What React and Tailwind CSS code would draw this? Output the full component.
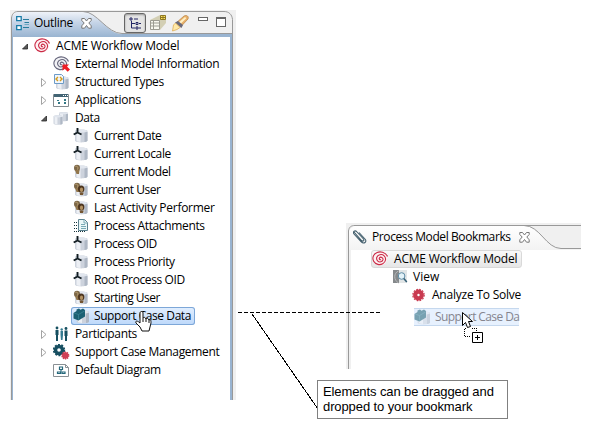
import React from "react";

function Spiral({ gray = false, arrow = false }) {
  const c = gray ? "#66667c" : "#cb2a45";
  return (
    <svg width="18" height="16" viewBox="0 0 18 16" fill="none" className="shrink-0">
      <ellipse cx="8" cy="7.800" rx="7.200" ry="6.600" fill={gray ? "#f2f2f5" : "#fdf0f2"} />
      <path d="M9 8.600C7.800 9.200 6.800 7.900 7.500 6.900C8.700 5.300 11.300 6.600 11 8.700C10.600 11 7.300 11.700 5.600 9.900C3.600 7.700 4.800 4.400 7.800 3.700C11.400 2.900 14 5.700 13.500 9C12.900 12.300 9.200 14.300 5.900 13.400C2 12.400 0 8.600 1.300 5.200C2.700 1.600 7 .2 10.600 1.300C12.900 2 14.700 3.400 15.500 5.500" stroke={c} strokeWidth="1.100" />
      {arrow && <path d="M9.500 8.500H16l-2 2 3 3-2.300 2.300-3-3-2.200 2z" fill="#ee1c24" />}
    </svg>
  );
}

function Cylinder({ x = 3 }) {
  return (
    <g transform={`translate(${x} 0)`}>
      <path d="M0 3c0-2 12.500-2 12.500 0v9.500c0 2.500-12.500 2.500-12.500 0z" fill="#cdd3dd" />
      <path d="M1.500 4h4v10c-2.500-.1-4-.6-4-1.200z" fill="#edf0f5" />
      <path d="M9.500 4h3v8.500c0 .8-1.300 1.200-3 1.400z" fill="#afb8c5" />
      <ellipse cx="6.250" cy="3.100" rx="6" ry="1.500" fill="#e1e6ee" />
    </g>
  );
}

function Icon({ name }) {
  if (name === "spiral") return <Spiral />;
  if (name === "external") return <Spiral gray arrow />;
  return (
    <svg width="17" height="16" viewBox="0 0 17 16" fill="none" className="shrink-0">
      {name === "types" && (
        <>
          <g transform="translate(3 1)"><Cylinder x={0} /></g>
          <path d="M1.500 .5h7l2 2v7h-9z" fill="#f1f6fb" stroke="#6c9bc8" />
          <path d="M5 3L3 5l2 2M7 3l2 2-2 2" stroke="#d49a18" strokeWidth="1.400" />
        </>
      )}
      {name === "apps" && (
        <>
          <path d="M.5 2.500h15v12H.5z" fill="#fff" stroke="#838b90" />
          <path d="M1 2h14v3H1z" fill="#426474" />
          <path d="M10 3.500h1M12 3.500h1M14 3.500h1" stroke="#fff" />
          <path d="M4 8h2v1H4zM11 7h2v2h-2zM5 10h2v2H5zM11 10h2v2h-2z" fill="#347886" />
        </>
      )}
      {name === "data" && (
        <>
          <g transform="translate(6 1) scale(.72 .72)"><Cylinder x={0} /></g>
          <g transform="translate(.5 4) scale(.72 .75)"><Cylinder x={0} /></g>
        </>
      )}
      {name === "primitive" && (
        <>
          <Cylinder x={2} />
          <path d="M4.500 0v4.500L.7 6.500M4.500 4.500l4 2" stroke="#111c21" strokeWidth="1.900" />
        </>
      )}
      {(name === "model" || name === "user") && (
        <>
          <Cylinder x={2} />
          <ellipse cx="4" cy="4" rx="3" ry="3.300" fill="#7d6848" />
          <path d="M2 6l1.500 4H6l.5-4z" fill="#92764c" />
          <path d="M2.500 2.500c2-1 3 1 2 3" stroke="#c3a879" />
          {name === "user" && (
            <>
              <ellipse cx="8.200" cy="7" rx="3.200" ry="3.600" fill="#4c351f" />
              <ellipse cx="8.500" cy="7.800" rx="1.600" ry="2.200" fill="#b39263" />
              <path d="M6.500 10.500l.5 2.500h3l.7-2.500" fill="#745632" />
            </>
          )}
        </>
      )}
      {name === "attach" && (
        <>
          <path d="M5.500 1.500h6l3 3v8h-9z" fill="#eaf7f8" stroke="#5c8290" />
          <path d="M11 1.500V5h3.500M8 6.500h4M8 8.500h5M8 10.500h5" stroke="#78a9b5" />
          <path d="M1 4.500h4M1 7.500h4M1 10.500h4M1 13.500h12" stroke="#17333a" strokeDasharray="1 1" />
        </>
      )}
      {name === "struct" && (
        <>
          <g transform="translate(3.500 1)"><Cylinder x={0} /></g>
          <path d="M.5 5l3-2V1.500L6 .5l1.500 1.300L10 .5 12 2v6.500L5.500 12.500.5 10.500z" fill="#1c6073" />
          <path d="M1 5l4.500 1.500L11.500 3M5.500 6.500v5" stroke="#458ea0" strokeWidth=".6" />
        </>
      )}
      {name === "people" && (
        <g transform="translate(.5 0)">
          <circle cx="3.500" cy="2" r="1.400" fill="#164f60" />
          <path d="M2 4h3v5h-.5v6h-2V9H2z" fill="#164f60" />
          <circle cx="8.200" cy="3.500" r="1.200" fill="#347b91" />
          <path d="M7 5h2.500v4L9 14H7.500L7 9z" fill="#347b91" />
          <circle cx="12.500" cy="2.500" r="1.400" fill="#164f60" />
          <path d="M11 4.500h3V10h-.5v5h-2v-5H11z" fill="#164f60" />
        </g>
      )}
      {name === "process" && (
        <>
          <circle cx="6" cy="6" r="3.500" stroke="#174f61" strokeWidth="3.400" />
          <circle cx="6" cy="6" r="5.400" stroke="#174f61" strokeWidth="1.600" strokeDasharray="2 1.393" />
          <circle cx="12.300" cy="11.500" r="3.200" fill="#cf4055" />
          <circle cx="12.300" cy="11.500" r="3.300" stroke="#cf4055" strokeDasharray="1.300 .773" strokeWidth="1.500" />
        </>
      )}
      {name === "diagram" && (
        <>
          <path d="M.5 2.500h12l3 3v9H.5z" fill="#fff" stroke="#8a9094" />
          <path d="M12.500 2.500v3h3" stroke="#8a9094" />
          <path d="M6.500 5h3v2.500h-3zM4.500 10h3v1.500h-3zM9 10h3v1.500H9zM8 7.500v2" stroke="#24677a" strokeWidth="1.200" />
        </>
      )}
      {name === "view" && (
        <>
          <path d="M0 1h14v13H0z" fill="#85898b" />
          <path d="M6 1h8v13H6z" fill="#e1e5e6" />
          <path d="M5.500 2c-5 2-5 9 0 12" stroke="#b6b8b9" />
          <circle cx="8.600" cy="7" r="3.300" fill="#e3f2f8" stroke="#5c8aa4" />
          <path d="M10.800 9.500l3 3.500" stroke="#315c73" strokeWidth="1.500" />
        </>
      )}
      {name === "redgear" && (
        <>
          <circle cx="6.500" cy="8" r="3.300" stroke="#c93a50" strokeWidth="4.200" />
          <circle cx="6.500" cy="8" r="5.700" stroke="#c93a50" strokeWidth="1.200" strokeDasharray="1.700 1.284" />
        </>
      )}
    </svg>
  );
}

function Twisty({ open }) {
  return (
    <svg width="8" height="10" viewBox="0 0 8 10" className="shrink-0">
      {open ? <path d="M6.500 3v5H1.500z" fill="#595959" stroke="#262626" strokeWidth=".8" /> : <path d="M1.500 1.500v8L6 5.500z" fill="#fff" stroke="#a3a3a3" />}
    </svg>
  );
}

function CloseTab() {
  return (
    <svg width="11" height="11" viewBox="0 0 11 11" className="shrink-0">
      <path d="M.8 .5h2.700l2 2.500 2-2.500h2.700v2L7.800 5l2.400 2.800v2.400H7.500l-2-2.700-2 2.700H.8V7.800L3.200 5 .8 2.500z" fill="#fff" stroke="#777" />
    </svg>
  );
}

const rows = [
  ["External Model Information", "external", 1, null, "tracking-[-0.37px]"],
  ["Structured Types", "types", 1, false, "tracking-[-0.39px]"],
  ["Applications", "apps", 1, false, "tracking-[-0.2px]"],
  ["Data", "data", 1, true, "tracking-[-0.4px]"],
  ["Current Date", "primitive", 2, null, "tracking-[-0.44px]"],
  ["Current Locale", "primitive", 2, null, "tracking-[-0.35px]"],
  ["Current Model", "model", 2, null, "tracking-[-0.35px]"],
  ["Current User", "user", 2, null, "tracking-[-0.5px]"],
  ["Last Activity Performer", "user", 2, null, "tracking-[-0.27px]"],
  ["Process Attachments", "attach", 2, null, "tracking-[-0.36px]"],
  ["Process OID", "primitive", 2, null, "tracking-[-0.45px]"],
  ["Process Priority", "primitive", 2, null, "tracking-[-0.39px]"],
  ["Root Process OID", "primitive", 2, null, "tracking-[-0.39px]"],
  ["Starting User", "user", 2, null, "tracking-[-0.54px]"],
  ["Support Case Data", "struct", 2, null, "tracking-[-0.43px]"],
  ["Participants", "people", 1, false, "tracking-[-0.36px]"],
  ["Support Case Management", "process", 1, false, "tracking-[-0.34px]"],
  ["Default Diagram", "diagram", 1, null, "tracking-[-0.38px]"],
];

function TreeRow({ row }) {
  const [text, icon, level, open, tracking] = row;
  const selected = text === "Support Case Data";
  return (
    <div className={`flex h-[18px] items-center ${level === 2 ? "pl-[58px]" : "pl-[27px]"}`}>
      {level === 1 && <span className="flex w-[13px]">{open !== null && <Twisty open={open} />}</span>}
      <div className={`flex h-[18px] items-center whitespace-nowrap ${selected ? "w-[124px] rounded-[3px] bg-linear-to-b from-[#e2efff] to-[#bdd8fa] ring-1 ring-inset ring-[#7da7d8]" : ""}`}>
        <span className={level === 2 ? "w-[23px] pl-[2px]" : "w-[22px]"}><Icon name={icon} /></span>
        <span className={tracking}>{text}</span>
      </div>
    </div>
  );
}

function OutlineHeader() {
  return (
    <div className="relative h-[27px]">
      <svg className="absolute inset-0" width="226" height="27" viewBox="0 0 226 27" fill="none">
        <defs>
          <linearGradient id="tab" x1="0" y1="0" x2="0" y2="1">
            <stop stopColor="#f2f5fa" />
            <stop offset=".45" stopColor="#c5d4e7" />
            <stop offset="1" stopColor="#99b4d1" />
          </linearGradient>
        </defs>
        <path d="M0 0h226v27H0z" fill="#f0f0f0" />
        <path d="M1 27V7L7 1h66c14 0 24 23 39 23h111v3z" fill="url(#tab)" />
        <path d="M112 24h111v3H112z" fill="#99b4d1" />
        <path d="M1.500 27V8C2 4 4 1.500 8 1.500h65c14 0 24 22 39 22h110M73 1.500h141c5 0 8 3 8.500 8V27" stroke="#999" />
      </svg>
      <div className="relative flex h-[26px] items-center pl-[6px]">
        <svg width="14" height="15" viewBox="0 0 14 15" fill="none">
          <path d="M.7 .7h4.500v4H.7zM.7 9.700h4.500v4H.7z" fill="#fff" stroke="#167ba7" strokeWidth="1.300" />
          <path d="M7 3.500h6M8.500 6.500H13M7 11.500h6" stroke="#287c9d" />
          <path d="M8.500 8.500H13" stroke="#6ea9c3" />
        </svg>
        <span className="ml-[4px] w-[47px] tracking-[-0.3px]">Outline</span>
        <CloseTab />
        <span className="ml-[32px] flex h-[20px] w-[22px] items-center justify-center rounded-[3px] border border-[#666] bg-[#e4e4e4] shadow-[inset_0_1px_2px_#999]">
          <svg width="12" height="13" viewBox="0 0 12 13" fill="none" stroke="#222565">
            <path d="M1 1h2v2H1zM5 2h4M2.500 4v7H6M2.500 6.500H6M7 5.500h2v2H7zM7 10h2v2H7zM10 6.500h2M10 11h2" />
          </svg>
        </span>
        <svg className="ml-[4px]" width="17" height="18" viewBox="0 0 17 18" fill="none">
          <path d="M0 6L10 1h6v8l-6 7z" fill="#d3cfb4" />
          <path d="M10.500 1.500h5v4h-5zM13 1v5M10 3.500h6" fill="#ffe35c" stroke="#8c7625" />
          <path d="M.5 6.500h9v9h-9zM0 9h10M0 12h10M3.500 6v10" fill="#f8f8ef" stroke="#9c9b91" />
        </svg>
        <svg className="ml-[5px]" width="17" height="17" viewBox="0 0 17 17">
          <path d="M4 8L12 1c3-1.500 5 .5 4 3L8.500 12z" fill="#e8b06a" stroke="#b9823f" strokeWidth=".7" />
          <path d="M6 8l7-6 1.300 1.300L8 9.500z" fill="#fff0c4" />
          <path d="M3 7.500L9.500 13 11 10 6 6z" fill="#68697c" />
          <path d="M1.500 10L3.500 8l4.500 4.500-3 2L.5 16z" fill="#ffe9a8" stroke="#dba547" strokeWidth=".7" />
        </svg>
        <span className="mb-[9px] ml-[9px] h-[4px] w-[10px] border border-[#666] bg-white" />
        <span className="mb-[3px] ml-[8px] h-[10px] w-[10px] border border-t-2 border-[#666] bg-white" />
      </div>
    </div>
  );
}

function Outline() {
  return (
    <section className="ml-[10px] mt-[10px] h-[390px] w-[226px] shrink-0">
      <OutlineHeader />
      <div className="flex h-[363px] border-l border-r-[3px] border-[#f0f0f0]">
        <div className="flex-1 border-x border-[#999]">
          <div className="h-full border-l border-r-2 border-[#99b4d1] bg-white">
            <div className="flex h-[18px] items-center pl-[8px]">
              <Twisty open />
              <span className="ml-[5px] w-[22px]"><Icon name="spiral" /></span>
              <span className="whitespace-nowrap tracking-[-0.2px]">ACME Workflow Model</span>
            </div>
            {rows.map((row) => <TreeRow key={row[0]} row={row} />)}
          </div>
        </div>
      </div>
    </section>
  );
}

function Bookmarks() {
  return (
    <section className="ml-[110px] mt-[223px] h-[146px] w-[235px] shrink-0">
      <div className="relative h-[27px]">
        <svg className="absolute inset-0" width="235" height="27" viewBox="0 0 235 27" fill="none">
          <defs><linearGradient id="lightTab" x1="0" y1="0" x2="0" y2="1"><stop stopColor="#fff" /><stop offset="1" stopColor="#f3f3f3" /></linearGradient></defs>
          <path d="M0 0h235v27H0z" fill="#f0f0f0" />
          <path d="M3 27V7L8 3h170c15 0 22 22 37 22h20v2z" fill="url(#lightTab)" />
          <path d="M2.500 27V8C3 4 5 2.500 9 2.500h169c16 0 22 23 37 23h20M178 2.500h57" stroke="#999" />
        </svg>
        <div className="relative flex h-[28px] items-center pl-[7px]">
          <svg width="14" height="14" viewBox="0 0 14 14" fill="none">
            <path d="M1 2l7.500 8.500c1.500 1.500 3 0 2-1.500L4 2C2-.2-.7 1.500 1 4l7 7.700c3 3 6.500 0 4-2.700L6 2.500" stroke="#435f6d" strokeWidth="1.100" />
          </svg>
          <span className="ml-[5px] w-[147px] whitespace-nowrap tracking-[-0.4px]">Process Model Bookmarks</span>
          <CloseTab />
        </div>
      </div>
      <div className="flex h-[119px] border-l-2 border-[#f0f0f0]">
        <div className="flex-1 border-l border-[#999]">
          <div className="h-full border-l-2 border-[#f0f0f0] pl-[20px]">
            <div className="flex h-[18px] w-[151px] items-center rounded-[3px] border border-[#d9d9d9] bg-linear-to-b from-[#fafafa] to-[#e6e6e6]">
              <span className="w-[22px]"><Icon name="spiral" /></span>
              <span className="whitespace-nowrap tracking-[-0.2px]">ACME Workflow Model</span>
            </div>
            <div className="flex h-[18px] items-center pl-[22px]">
              <span className="w-[20px]"><Icon name="view" /></span><span>View</span>
            </div>
            <div className="flex h-[18px] items-center pl-[41px]">
              <span className="w-[20px]"><Icon name="redgear" /></span><span className="whitespace-nowrap tracking-[-0.22px]">Analyze To Solve</span>
            </div>
            <div className="ml-[43px] mt-[4px] flex h-[18px] w-[105px] items-center border-y border-[#c5d8ee] bg-[#e7f1fe] text-[#85858e]">
              <span className="w-[21px] shrink-0 opacity-55"><Icon name="struct" /></span>
              <span className="whitespace-nowrap tracking-[-0.6px]">Support Case Da</span>
            </div>
          </div>
        </div>
      </div>
    </section>
  );
}

export default function App() {
  return (
    <main className="relative flex h-[442px] w-[601px] items-start overflow-hidden bg-white font-['Open_Sans','Noto_Sans',sans-serif] text-[12px] leading-[18px] text-black">
      <Outline />
      <Bookmarks />
      <svg className="absolute inset-0" width="601" height="442" fill="none" shapeRendering="crispEdges">
        <path d="M238 312.500h142" stroke="#000" strokeDasharray="4 2" />
        <path d="M252 314l66 95" stroke="#000" />
      </svg>
      <svg className="absolute left-[135px] top-[310px]" width="18" height="22" viewBox="0 0 18 22">
        <path d="M5 12V3c0-2 3-2 3 0v5c1-1 2-1 3 1 1-1 2-1 3 1 2-1 2 1 2 3l-1 4-1 4H7l-2-4-4-4c-1-2 1-3 4 0z" fill="#fff" stroke="#111" />
        <path d="M8 8v4M11 9v3M14 10v3" stroke="#111" />
      </svg>
      <svg className="absolute left-[461px] top-[311px]" width="23" height="33" viewBox="0 0 23 33" fill="none">
        <path d="M1.500 1.500v13l3-3 2 5 3-1-2-5h4z" fill="#fff" stroke="#000" />
        <path d="M11 17.500h4.500v4M9 25.500H3.500v-8H6" stroke="#000" strokeDasharray="1 1" shapeRendering="crispEdges" />
        <path d="M11.500 21.500h10v10h-10zM14 26.500h5M16.500 24v5" fill="#fff" stroke="#000" />
      </svg>
      <aside className="absolute left-[317px] top-[380px] h-[39px] w-[191px] border border-[#808080] bg-white pl-[5px] pt-[3px] font-['Liberation_Sans',sans-serif] text-[13px] leading-[15px] tracking-[-0.1px]">
        Elements can be dragged and<br />dropped to your bookmark
      </aside>
    </main>
  );
}
